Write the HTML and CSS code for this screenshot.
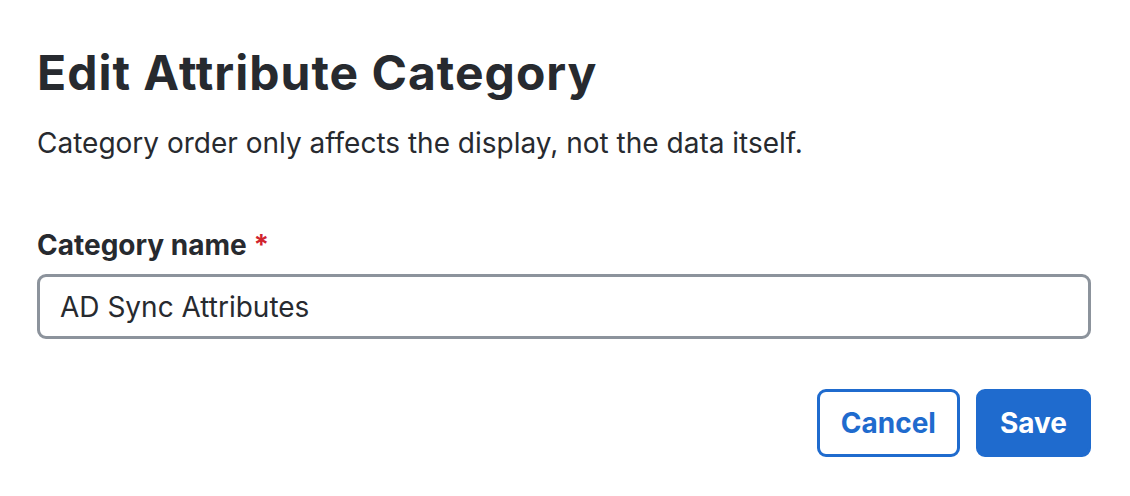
FILE: index.html
```html
<!DOCTYPE html>
<html>
<head>
<meta charset="utf-8">
<link rel="stylesheet" href="styles.css">
</head>
<body>
<div class="dialog">
  <h1 class="title">Edit Attribute Category</h1>
  <p class="desc">Category order only affects the display, not the data itself.</p>
  <div class="field">
    <label class="label">Category name <span class="req">*</span></label>
    <div class="input">AD Sync Attributes</div>
  </div>
  <div class="actions">
    <button class="btn btn-secondary">Cancel</button>
    <button class="btn btn-primary">Save</button>
  </div>
</div>
</body>
</html>
```
FILE: styles.css
```css
html, body {
  margin: 0;
  padding: 0;
  background: #ffffff;
}
body {
  font-family: Inter, "Noto Sans", sans-serif;
  color: #272a2f;
}
.dialog {
  padding: 44px 39px 0 37px;
  display: flex;
  flex-direction: column;
}
.title {
  margin: 0;
  font-size: 48px;
  line-height: 58px;
  font-weight: 700;
  letter-spacing: 1px;
}
.desc {
  margin: 24px 0 0;
  font-size: 28px;
  line-height: 34px;
  font-weight: 400;
}
.field {
  margin-top: 68px;
  display: flex;
  flex-direction: column;
}
.label {
  font-size: 28px;
  line-height: 34px;
  font-weight: 700;
}
.req {
  color: #d1242f;
}
.input {
  margin-top: 12px;
  box-sizing: border-box;
  height: 65px;
  border: 3px solid #8c939c;
  border-radius: 9px;
  padding: 0 20px;
  display: flex;
  align-items: center;
  font-size: 28px;
}
.actions {
  margin-top: 50px;
  display: flex;
  justify-content: flex-end;
  gap: 16px;
}
.btn {
  box-sizing: border-box;
  height: 68px;
  border-radius: 9px;
  font-family: Inter, "Noto Sans", sans-serif;
  font-size: 28px;
  font-weight: 700;
  padding: 0 21px;
  border: 3px solid #1f6bce;
}
.btn-secondary {
  background: #ffffff;
  color: #1f6bce;
}
.btn-primary {
  background: #1f6bce;
  color: #ffffff;
}
```
